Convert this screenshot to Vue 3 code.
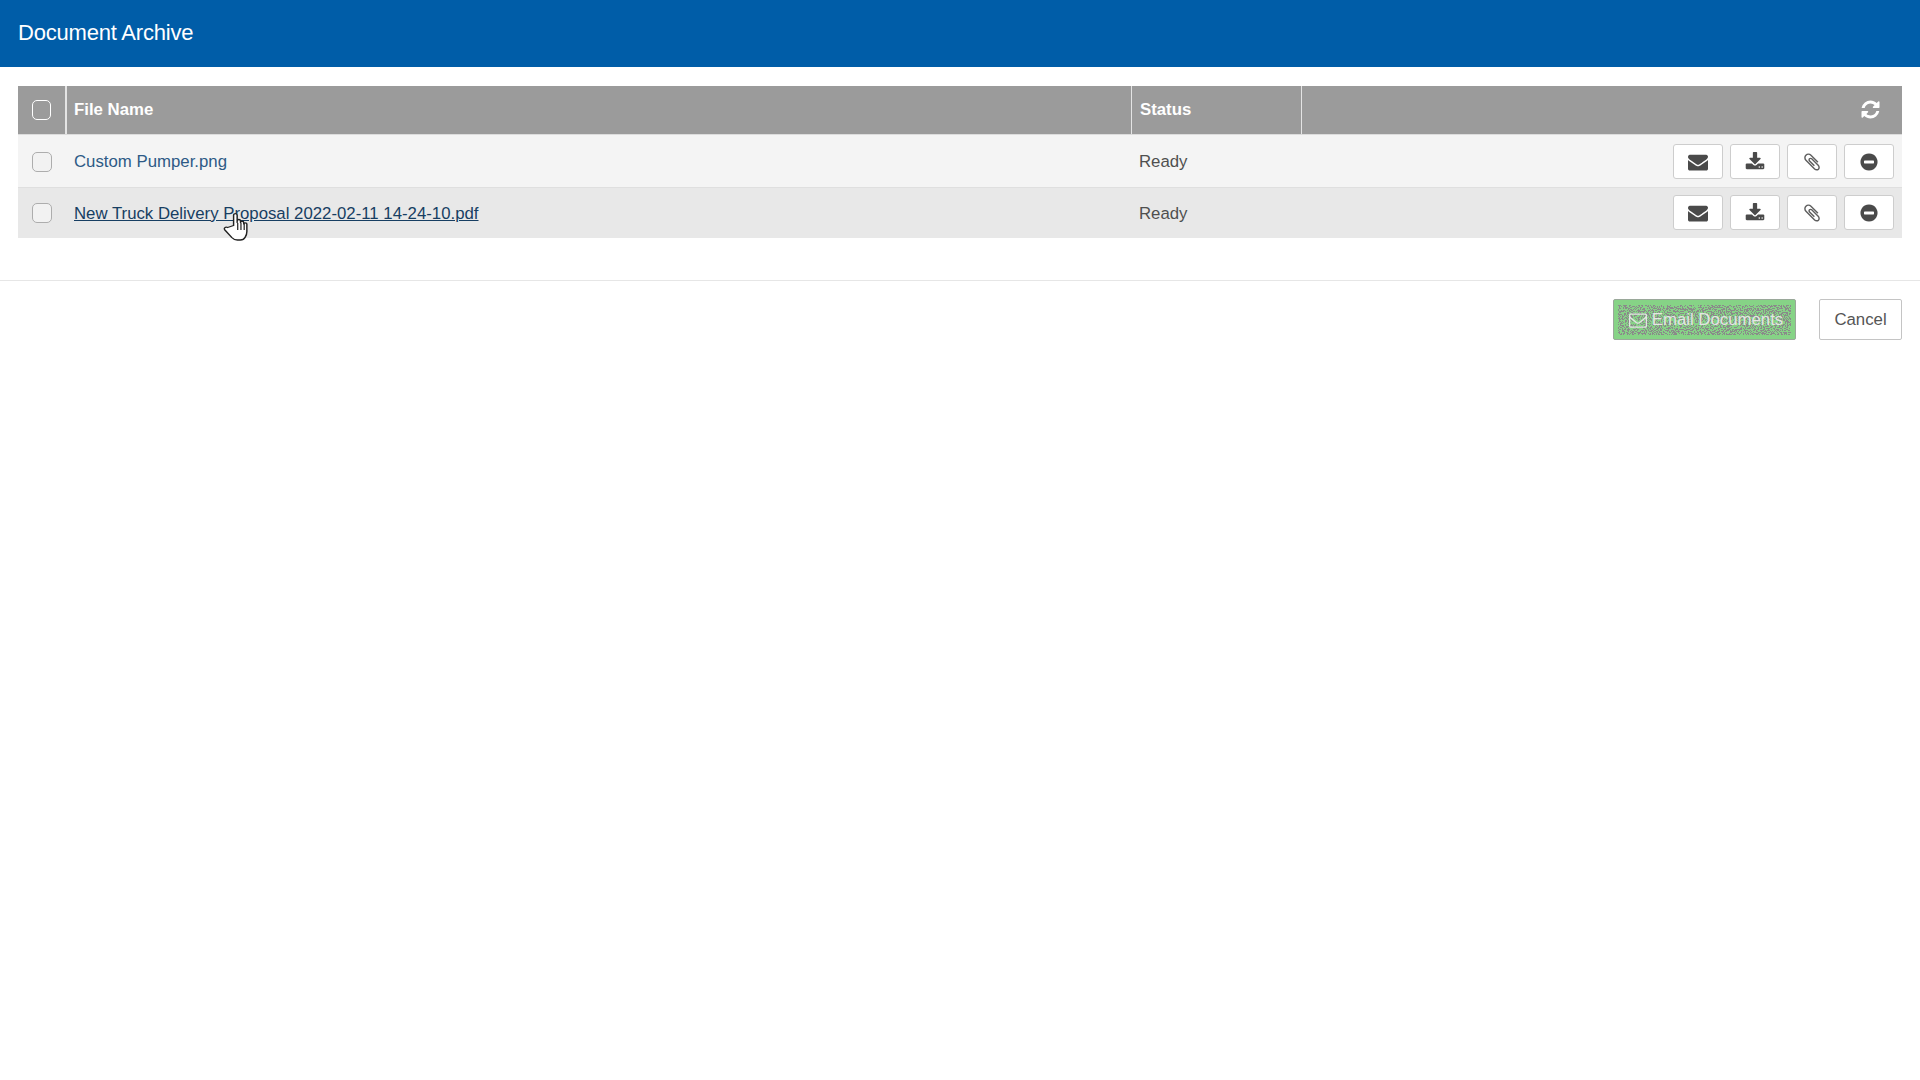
<script setup>
const icons = {
  envelope: 'M1792 710v794q0 66-47 113t-113 47h-1472q-66 0-113-47t-47-113v-794q44 49 101 87 362 246 497 345 57 42 92.5 65.5t94.5 48 110 24.5h2q51 0 110-24.5t94.5-48 92.5-65.5q170-123 498-345 57-39 100-87zm0-294q0 79-49 151t-122 123q-376 261-468 325-10 7-42.5 30.5t-54 38-52 32.5-57.5 27-50 9h-2q-23 0-50-9t-57.5-27-52-32.5-54-38-42.5-30.5q-91-64-262-182.5t-205-142.5q-62-42-117-115.5t-55-136.5q0-78 41.5-130t118.5-52h1472q65 0 112.5 47t47.5 113z',
  download: 'M1344 1344q0-26-19-45t-45-19-45 19-19 45 19 45 45 19 45-19 19-45zm256 0q0-26-19-45t-45-19-45 19-19 45 19 45 45 19 45-19 19-45zm128-224v320q0 40-28 68t-68 28h-1472q-40 0-68-28t-28-68v-320q0-40 28-68t68-28h465l135 136q58 56 136 56t136-56l136-136h464q40 0 68 28t28 68zm-325-569q17 41-14 70l-448 448q-18 19-45 19t-45-19l-448-448q-31-29-14-70 17-39 59-39h256v-448q0-26 19-45t45-19h256q26 0 45 19t19 45v448h256q42 0 59 39z',
  paperclip: 'M1596 1385q0 117-79 196t-196 79q-135 0-235-100l-777-776q-113-115-113-271 0-159 110-270t269-111q158 0 273 113l605 606q10 10 10 22 0 16-30.5 46.5t-46.5 30.5q-13 0-23-10l-606-607q-79-77-181-77-106 0-179 75t-73 181q0 105 76 181l776 777q63 63 145 63 64 0 106-42t42-106q0-82-63-145l-581-581q-26-24-60-24-29 0-48 19t-19 48q0 32 25 59l410 410q10 10 10 22 0 16-31 47t-47 31q-12 0-22-10l-410-410q-63-61-63-149 0-82 57-139t139-57q88 0 149 63l581 581q100 98 100 235z',
  minus: 'M1344 960v-128q0-26-19-45t-45-19h-768q-26 0-45 19t-19 45v128q0 26 19 45t45 19h768q26 0 45-19t19-45zm320-64q0 209-103 385.5t-279.5 279.5-385.5 103-385.5-103-279.5-279.5-103-385.5 103-385.5 279.5-279.5 385.5-103 385.5 103 279.5 279.5 103 385.5z',
  refresh: 'M1639 1056q0 5-1 7-64 268-268 434.5t-478 166.5q-146 0-282.5-55t-243.5-157l-129 129q-19 19-45 19t-45-19-19-45v-448q0-26 19-45t45-19h448q26 0 45 19t19 45-19 45l-137 137q71 66 161 102t187 36q134 0 250-65t186-179q11-17 53-117 8-23 30-23h192q13 0 22.5 9.5t9.5 22.5zm25-800v448q0 26-19 45t-45 19h-448q-26 0-45-19t-19-45 19-45l138-138q-148-137-349-137-134 0-250 65t-186 179q-11 17-53 117-8 23-30 23h-199q-13 0-22.5-9.5t-9.5-22.5v-7q65-268 270-434.5t480-166.5q146 0 284 55.5t245 156.5l130-129q19-19 45-19t45 19 19 45z',
  envelopeO: 'M1664 1504v-768q-32 36-69 66-268 206-426 338-51 43-83 67t-86.5 48.5-102.5 24.5h-2q-48 0-102.5-24.5t-86.5-48.5-83-67q-158-132-426-338-37-30-69-66v768q0 13 9.5 22.5t22.5 9.5h1472q13 0 22.5-9.5t9.5-22.5zm0-1051v-24.5l-.5-13-3-12.5-5.5-9-9-7.5-14-2.5h-1472q-13 0-22.5 9.5t-9.5 22.5q0 168 147 284 193 152 401 317 6 5 35 29.5t46 37.5 44.5 31.5 50.5 27.5 43 9h2q20 0 43-9t50.5-27.5 44.5-31.5 46-37.5 35-29.5q208-165 401-317 54-43 100.5-115.5t46.5-131.5zm128-37v1088q0 66-47 113t-113 47h-1472q-66 0-113-47t-47-113v-1088q0-66 47-113t113-47h1472q66 0 113 47t47 113z'
}
const actions = ['envelope', 'download', 'paperclip', 'minus']
const rows = [
  { name: 'Custom Pumper.png', status: 'Ready', hover: false },
  { name: 'New Truck Delivery Proposal 2022-02-11 14-24-10.pdf', status: 'Ready', hover: true }
]
</script>

<template>
  <div class="page">
    <header class="title-bar">Document Archive</header>
    <main class="content">
      <div class="grid">
        <div class="row head">
          <div class="cell check-cell"><span class="box box-head"></span></div>
          <div class="cell name-cell">File Name</div>
          <div class="cell status-cell">Status</div>
          <div class="cell tools-cell">
            <svg class="refresh" viewBox="0 0 1792 1792"><path :d="icons.refresh" /></svg>
          </div>
        </div>
        <div v-for="(r, i) in rows" :key="r.name" class="row body" :class="i === 0 ? 'odd' : 'even'">
          <div class="cell check-cell"><span class="box"></span></div>
          <div class="cell name-cell"><a class="link" :class="{ hover: r.hover }">{{ r.name }}</a></div>
          <div class="cell status-cell">{{ r.status }}</div>
          <div class="cell tools-cell">
            <button v-for="a in actions" :key="a" class="icon-btn">
              <svg :class="['ico', 'ico-' + a]" viewBox="0 0 1792 1792"><path :d="icons[a]" /></svg>
            </button>
          </div>
        </div>
        <svg class="cursor" viewBox="0 0 26 30" preserveAspectRatio="none">
          <path d="M9.5 14.5V4.2c0-2.2 3.2-2.2 3.2 0v7.3l0-1.6c0-1.9 3-1.9 3 0v1.6c0-1.7 2.9-1.7 2.9 0v1.4c0-1.5 2.8-1.5 2.8 0v7.6c0 2.6-.6 4.3-1.6 5.9-.5 1-1.4 2.6-4.3 2.6h-2.6c-2.2 0-3.5-.8-4.9-2.4L1.7 19c-1.3-1.7.6-3.7 2.4-2.5z" fill="#fff" stroke="#222" stroke-width="1.3" stroke-linejoin="round" />
          <path d="M13.2 12v7M16.1 12v7M19 13v6" fill="none" stroke="#222" stroke-width="1.1" />
        </svg>
      </div>
      <div class="divider"></div>
      <div class="footer">
        <button class="email">
          <svg class="noise" width="100%" height="100%">
            <defs>
              <filter id="dither" x="0" y="0" width="100%" height="100%" color-interpolation-filters="sRGB">
                <feTurbulence type="fractalNoise" baseFrequency="0.95" numOctaves="1" seed="7" />
                <feColorMatrix type="matrix" values="0 0 0 0 0.54  0 0 0 0 0.54  0 0 0 0 0.54  6 0 0 0 -2.6" />
                <feComponentTransfer>
                  <feFuncA type="discrete" tableValues="0 1" />
                </feComponentTransfer>
              </filter>
            </defs>
            <rect x="4" y="5" width="173" height="30" filter="url(#dither)" />
          </svg>
          <span class="email-label">
            <svg class="ico-o" viewBox="0 0 1792 1792"><path :d="icons.envelopeO" /></svg>
            <span>Email Documents</span>
          </span>
        </button>
        <button class="cancel">Cancel</button>
      </div>
    </main>
  </div>
</template>

<style>
html, body { margin: 0; background: #fff; }
</style>

<style scoped>
.page {
  width: 1920px;
  height: 1080px;
  font-family: "Liberation Sans", Arial, sans-serif;
  font-size: 16.8px;
  color: #4f4f4f;
  background: #fff;
  overflow: hidden;
}
.title-bar {
  height: 67px;
  line-height: 65px;
  padding-left: 18px;
  background: #005da8;
  color: #fff;
  font-size: 22px;
  letter-spacing: -0.2px;
}
.content { padding: 19px 18px 0; }
.grid { position: relative; }
.row {
  display: grid;
  grid-template-columns: 47px 1066px 170px 1fr;
}
.head {
  height: 48px;
  background: #9b9b9b;
  color: #fff;
  font-weight: 700;
  border-bottom: 1px solid #dcdcdc;
}
.head .cell { border-left: 1px solid #e4e4e4; }
.head .check-cell { border-left: 0; }
.head .name-cell { border-left-width: 2px; padding-left: 7px; }
.cell { display: flex; align-items: center; min-width: 0; }
.check-cell { justify-content: center; }
.name-cell { padding-left: 9px; }
.status-cell { padding-left: 8px; }
.tools-cell { justify-content: flex-end; gap: 7px; padding-right: 8px; }
.head .tools-cell { padding-right: 21px; padding-bottom: 2px; box-sizing: border-box; }
.odd { height: 52px; background: #f4f4f4; border-bottom: 1px solid #dfdfdf; }
.odd .cell { padding-top: 1px; box-sizing: border-box; }
.even { height: 50px; background: #e8e8e8; }
.even .name-cell, .even .status-cell { padding-top: 1px; box-sizing: border-box; }
.even .tools-cell { padding-bottom: 1px; box-sizing: border-box; }
.box {
  width: 18px;
  height: 18px;
  border: 1px solid #adadad;
  border-radius: 5px;
  background: #f2f2f2;
}
.box-head { width: 17px; border-color: #fff; background: #9b9b9b; }
.link { color: #2d5a86; cursor: pointer; }
.link.hover { color: #173e62; text-decoration: underline; }
.refresh { width: 21px; height: 21px; fill: #fff; }
.icon-btn {
  width: 50px;
  height: 35px;
  padding: 0;
  display: flex;
  align-items: center;
  justify-content: center;
  background: #fff;
  border: 1px solid #cdcdcd;
  border-radius: 3px;
  cursor: pointer;
}
.ico { width: 20px; height: 20px; fill: #4a4a4a; }
.ico-paperclip { fill: #5e5e5e; }
.cursor {
  position: absolute;
  left: 205px;
  top: 125px;
  width: 29px;
  height: 30px;
}
.divider { height: 1px; background: #e6e6e6; margin: 42px -18px 18px; }
.footer { display: flex; justify-content: flex-end; gap: 23px; }
.email {
  position: relative;
  width: 183px;
  height: 41px;
  padding: 0 0 0 3px;
  background: #86d386;
  border: 1px solid #9aa89a;
  border-radius: 2px;
  color: #e4e4e4;
  font: inherit;
  cursor: pointer;
}
.noise { position: absolute; left: 0; top: 0; }
.email-label {
  position: relative;
  display: flex;
  align-items: center;
  justify-content: center;
  gap: 5px;
}
.ico-o { width: 18px; height: 18px; fill: #e4e4e4; }
.cancel {
  width: 83px;
  height: 41px;
  padding: 0;
  background: #fff;
  border: 1px solid #c4c4c4;
  border-radius: 2px;
  color: #555;
  font: inherit;
  cursor: pointer;
}
</style>
